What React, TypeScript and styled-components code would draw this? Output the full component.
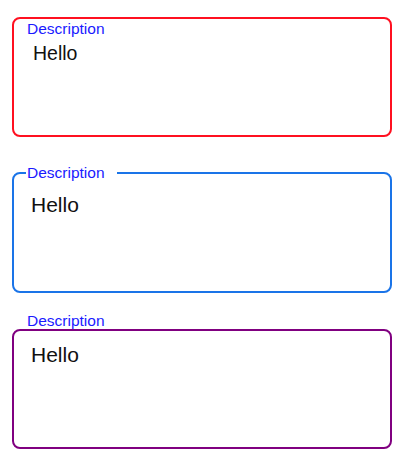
import React from "react";
import styled, { createGlobalStyle } from "styled-components";

const Global = createGlobalStyle`
  html, body { margin: 0; padding: 0; background: #fff; }
  body { font-family: "Liberation Sans", Arial, sans-serif; }
`;

const Page = styled.div`
  display: flex;
  flex-direction: column;
  padding: 17px 14px 0 12px;
  width: 380px;
`;

const InsetBox = styled.div`
  box-sizing: border-box;
  height: 120px;
  border: 2px solid #ff1020;
  border-radius: 8px;
  padding: 1px 0 0 13px;
  display: flex;
  flex-direction: column;
`;

const InsetLabel = styled.div`
  font-size: 15.5px;
  color: #1a1aff;
  line-height: 17px;
`;

const Value = styled.div<{ $size: number; $left: number; $top: number }>`
  font-size: ${(p) => p.$size}px;
  line-height: 1.2;
  color: #111;
  padding-left: ${(p) => p.$left}px;
  margin-top: ${(p) => p.$top}px;
`;

const Fieldset = styled.fieldset`
  box-sizing: border-box;
  margin: 27px 0 0 0;
  height: 129px;
  border: 2px solid #1a74e8;
  border-radius: 8px;
  padding: 11px 0 0 17px;
  min-width: 0;
`;

const Legend = styled.legend`
  font-size: 15.5px;
  color: #1a1aff;
  padding: 0 12px 0 1px;
  margin-left: -5px;
  line-height: 17px;
`;

const Stack = styled.div`
  display: flex;
  flex-direction: column;
  margin-top: 19px;
`;

const TopLabel = styled.div`
  font-size: 15.5px;
  color: #1a1aff;
  line-height: 17px;
  padding-left: 15px;
`;

const OutlineBox = styled.div`
  box-sizing: border-box;
  height: 120px;
  border: 2px solid #800080;
  border-radius: 8px;
  padding: 11px 0 0 17px;
`;

export default function App() {
  return (
    <>
      <Global />
      <Page>
        <InsetBox>
          <InsetLabel>Description</InsetLabel>
          <Value $size={19.5} $left={6} $top={5}>
            Hello
          </Value>
        </InsetBox>
        <Fieldset>
          <Legend>Description</Legend>
          <Value $size={21} $left={0} $top={0}>
            Hello
          </Value>
        </Fieldset>
        <Stack>
          <TopLabel>Description</TopLabel>
          <OutlineBox>
            <Value $size={21} $left={0} $top={0}>
              Hello
            </Value>
          </OutlineBox>
        </Stack>
      </Page>
    </>
  );
}
